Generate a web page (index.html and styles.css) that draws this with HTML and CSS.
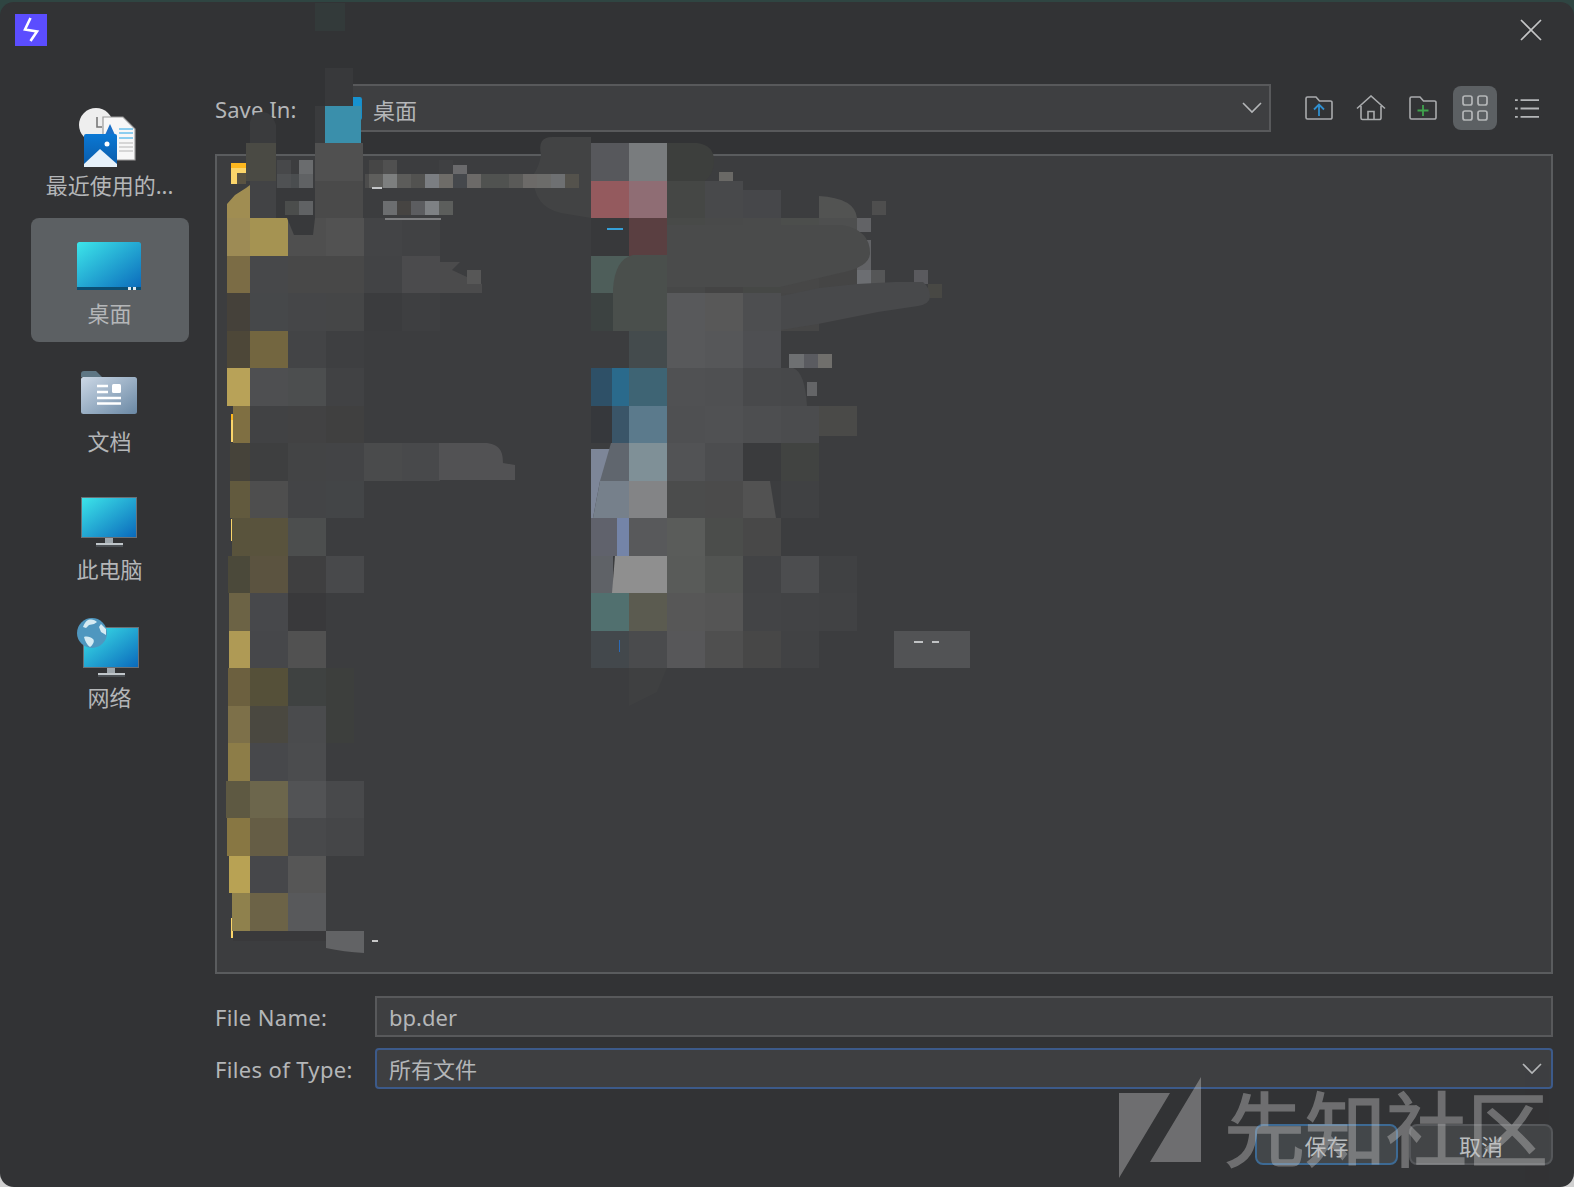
FILE: index.html
```html
<!DOCTYPE html>
<html lang="zh">
<head>
<meta charset="utf-8">
<title>Save</title>
<link rel="stylesheet" href="styles.css">
</head>
<body>
<div class="dialog">
  <header class="titlebar">
    <svg class="app-icon" viewBox="0 0 32 32"><rect width="32" height="32" fill="#5b4dff"/><path d="M15.5 4 10 15.5l12 2L15.5 27" fill="none" stroke="#fff" stroke-width="2.6"/></svg>
    <svg class="close" viewBox="0 0 22 22"><path d="M1 1l20 20M21 1 1 21" stroke="#c4c5c6" stroke-width="1.7" fill="none"/></svg>
  </header>
  <main class="main">
    <nav class="sidebar">
      <div class="place">
        <svg class="place-icon" viewBox="0 0 72 72">
          <defs>
            <linearGradient id="g1" x1="0" y1="0" x2="1" y2="1"><stop offset="0" stop-color="#3de6ea"/><stop offset="1" stop-color="#0a68bb"/></linearGradient>
            <linearGradient id="g2" x1="0" y1="0" x2="0" y2="1"><stop offset="0" stop-color="#0a78d4"/><stop offset="1" stop-color="#0a5aa8"/></linearGradient>
            <linearGradient id="g3" x1="0" y1="0" x2="1" y2="1"><stop offset="0" stop-color="#ccd8e6"/><stop offset="1" stop-color="#6a88a4"/></linearGradient>
          </defs>
          <circle cx="22" cy="25" r="17" fill="#eeeeee"/>
          <path d="M23 17v10h5" stroke="#777" stroke-width="1.6" fill="none"/>
          <path d="M29 17h20l12 12v31H29z" fill="#f7f7f7" stroke="#9a9a9a" stroke-width="1.2"/>
          <path d="M45 29h14M45 33h14M45 38h14" stroke="#20a4e8" stroke-width="1"/>
          <path d="M45 43h14M45 47h14M45 51h14" stroke="#b5b5b5" stroke-width="1"/>
          <path d="M36 24l-5 11h10z" fill="#1a70c8"/>
          <rect x="10" y="34" width="33" height="33" rx="2" fill="url(#g2)"/>
          <circle cx="33" cy="44" r="2.5" fill="#fff"/>
          <path d="M10 67v-3l16-15 17 15v3z" fill="#e6f1fa"/>
        </svg>
        <span class="place-label">最近使用的...</span>
      </div>
      <div class="place selected">
        <svg class="place-icon" viewBox="0 0 72 72">
          <rect x="3" y="14" width="64" height="48" rx="2.5" fill="url(#g1)"/>
          <rect x="3" y="59" width="64" height="3" fill="#0b4f74"/>
          <rect x="54" y="59" width="3" height="3" fill="#dfe8ee"/><rect x="59" y="59" width="3" height="3" fill="#dfe8ee"/>
        </svg>
        <span class="place-label">桌面</span>
      </div>
      <div class="place">
        <svg class="place-icon" viewBox="0 0 72 72">
          <path d="M7 21v-3a3 3 0 0 1 3-3h12l6 6z" fill="#5e7684"/>
          <rect x="7" y="21" width="56" height="37" rx="2.5" fill="url(#g3)"/>
          <path d="M23 30h11M23 36h11M23 42h24M23 47.500h24" stroke="#fff" stroke-width="2.600"/>
          <rect x="38" y="28" width="9" height="9" rx="1.500" fill="#fff"/>
        </svg>
        <span class="place-label">文档</span>
      </div>
      <div class="place">
        <svg class="place-icon" viewBox="0 0 72 72">
          <rect x="7.500" y="13.500" width="55" height="40" fill="url(#g1)" stroke="#6a7076" stroke-width="1"/>
          <rect x="31" y="54" width="8" height="5" fill="#9ea6ac"/>
          <rect x="22" y="59" width="27" height="2" fill="#c0c6ca"/>
          <rect x="22" y="61" width="27" height="2" fill="#4c5054"/>
        </svg>
        <span class="place-label">此电脑</span>
      </div>
      <div class="place">
        <svg class="place-icon" viewBox="0 0 72 72">
          <rect x="9.500" y="15.500" width="55" height="40" fill="url(#g1)" stroke="#6a7076" stroke-width="1"/>
          <rect x="33" y="56" width="8" height="5" fill="#9ea6ac"/>
          <rect x="24" y="61" width="27" height="2" fill="#c0c6ca"/>
          <rect x="24" y="63" width="27" height="2" fill="#4c5054"/>
          <circle cx="18" cy="21" r="15" fill="#4f97bf"/>
          <path d="M10 25c3-1 7 0 9 2 2 2 0 6-3 8-3-2-5-6-6-10zM14 8c4-1 7 0 9 2l-3 2-5 1-3 3-3-1c1-3 3-6 5-7zM27 12l5 5 0 6-5-3-2-5z" fill="#d5ebf3"/>
        </svg>
        <span class="place-label">网络</span>
      </div>
    </nav>
    <section class="content">
      <div class="toolbar">
        <span class="field-label save-label">Save In:</span>
        <div class="combo path-combo">
          <svg class="combo-folder" viewBox="0 0 24 24"><rect x="1" y="1" width="22" height="22" rx="2" fill="#1792cf"/></svg>
          <span class="value">桌面</span>
          <svg class="chevron" viewBox="0 0 20 12"><path d="M1 1l9 9 9-9" fill="none" stroke="#b4b6b8" stroke-width="1.600"/></svg>
        </div>
        <div class="tools">
          <button class="tool"><svg viewBox="0 0 30 26"><path d="M2 22.500V3.500a1.500 1.500 0 0 1 1.500-1.500H12l3.500 4h11A1.500 1.500 0 0 1 28 7.500v15a1.500 1.500 0 0 1-1.500 1.500h-23A1.500 1.500 0 0 1 2 22.500z" fill="none" stroke="#a9abad" stroke-width="1.600"/><path d="M15 21V10M10 14.500l5-5 5 5" fill="none" stroke="#2f8fd0" stroke-width="1.800"/></svg></button>
          <button class="tool"><svg viewBox="0 0 30 26"><path d="M1 13.500 15 1l14 12.500M5 11v12a1.500 1.500 0 0 0 1.500 1.500h17A1.500 1.500 0 0 0 25 23V11M12 24.500V16.500h6v8" fill="none" stroke="#a9abad" stroke-width="1.600"/></svg></button>
          <button class="tool"><svg viewBox="0 0 30 26"><path d="M2 22.500V3.500a1.500 1.500 0 0 1 1.500-1.500H12l3.500 4h11A1.500 1.500 0 0 1 28 7.500v15a1.500 1.500 0 0 1-1.500 1.500h-23A1.500 1.500 0 0 1 2 22.500z" fill="none" stroke="#a9abad" stroke-width="1.600"/><path d="M15 10v11M9.500 15.500h11" fill="none" stroke="#3fa34d" stroke-width="1.800"/></svg></button>
          <button class="tool active"><svg viewBox="0 0 26 26"><g fill="none" stroke="#b4b6b8" stroke-width="1.700"><rect x="1" y="1" width="9" height="9" rx="2"/><rect x="16" y="1" width="9" height="9" rx="2"/><rect x="1" y="16" width="9" height="9" rx="2"/><rect x="16" y="16" width="9" height="9" rx="2"/></g></svg></button>
          <button class="tool"><svg class="list-glyph" viewBox="0 0 26 22"><path d="M6 2h20M6 11h20M6 20h20M0 2h3M0 11h3M0 20h3" fill="none" stroke="#b4b6b8" stroke-width="1.900"/></svg></button>
        </div>
      </div>
      <div class="file-list"></div>
      <div class="form-row">
        <span class="field-label">File Name:</span>
        <div class="input"><span class="value">bp.der</span></div>
      </div>
      <div class="form-row">
        <span class="field-label">Files of Type:</span>
        <div class="input focused"><span class="value">所有文件</span>
          <svg class="chevron" viewBox="0 0 20 12"><path d="M1 1l9 9 9-9" fill="none" stroke="#b4b6b8" stroke-width="1.600"/></svg>
        </div>
      </div>
      <div class="actions">
        <button class="btn primary">保存</button>
        <button class="btn">取消</button>
      </div>
    </section>
  </main>

  <svg class="mosaic" viewBox="0 0 1574 1187" shape-rendering="crispEdges">
    <rect x="315" y="3" width="30" height="28" fill="#333a3a"/>
    <rect x="325" y="68" width="28" height="38" fill="#38393b"/>
    <path d="M250 143v-21q2-10 12-10t14 13v18z" fill="#3a3b3d" shape-rendering="auto"/>
    <rect x="315" y="106" width="10" height="37" fill="#3a3b3d"/>
    <rect x="325" y="106" width="36" height="37" fill="#3a8fab"/>
    <rect x="231" y="163" width="15" height="5" fill="#fdb81f"/>
    <rect x="231" y="168" width="15" height="16" fill="#fbd56a"/>
    <rect x="237" y="173" width="9" height="11" fill="#5a5342"/>
    <rect x="231" y="414" width="6" height="6" fill="#fdb81f"/>
    <rect x="231" y="420" width="3" height="22" fill="#fbd56a"/>
    <rect x="231" y="519" width="3" height="22" fill="#fbd56a"/>
    <rect x="231" y="918" width="5" height="20" fill="#fbd56a"/>

    <!-- left column: strip and columns 0-5 -->
    <rect x="246" y="143" width="30" height="38" fill="#4a4a44"/>
    <rect x="315" y="143" width="48" height="38" fill="#505050"/>
    <rect x="250" y="181" width="26" height="37" fill="#424345"/>
    <rect x="315" y="181" width="48" height="37" fill="#4a4a4a"/>
    <path d="M276 188h39v30h-39z" fill="#38393b"/>
    <path d="M227 204l8-9 11-7 4-3v33h-23z" fill="#a08d52" shape-rendering="auto"/>

    <rect x="227" y="218" width="23" height="38" fill="#9d8b55"/><rect x="250" y="218" width="38" height="38" fill="#a59352"/><rect x="288" y="218" width="38" height="38" fill="#4f4f4f"/><rect x="326" y="218" width="38" height="38" fill="#525252"/><rect x="364" y="218" width="38" height="38" fill="#434446"/><rect x="402" y="218" width="38" height="38" fill="#414244"/>
    <path d="M287 218h28l-2 17h-19z" fill="#38393b" shape-rendering="auto"/>
    <rect x="227" y="256" width="23" height="37" fill="#7b6c45"/><rect x="250" y="256" width="38" height="37" fill="#47484a"/><rect x="288" y="256" width="38" height="37" fill="#484848"/><rect x="326" y="256" width="38" height="37" fill="#484848"/><rect x="364" y="256" width="38" height="37" fill="#424345"/><rect x="402" y="256" width="38" height="37" fill="#4b4b4d"/><path d="M440 262h20l-8 8 30 14v9h-42z" fill="#4b4b4c" shape-rendering="auto"/><rect x="467" y="270" width="14" height="14" fill="#575757"/>
    <rect x="227" y="293" width="23" height="38" fill="#45413a"/><rect x="250" y="293" width="38" height="38" fill="#46484a"/><rect x="288" y="293" width="38" height="38" fill="#454648"/><rect x="326" y="293" width="38" height="38" fill="#454647"/><rect x="364" y="293" width="38" height="38" fill="#3b3c3e"/><rect x="402" y="293" width="38" height="38" fill="#3e3f41"/>
    <rect x="227" y="331" width="23" height="37" fill="#4d4738"/><rect x="250" y="331" width="38" height="37" fill="#736640"/><rect x="288" y="331" width="38" height="37" fill="#434446"/><rect x="326" y="331" width="38" height="37" fill="#3e3f41"/>
    <rect x="227" y="368" width="23" height="38" fill="#b8a258"/><rect x="250" y="368" width="38" height="38" fill="#4e4f51"/><rect x="288" y="368" width="38" height="38" fill="#4c4e4f"/><rect x="326" y="368" width="38" height="38" fill="#414244"/>
    <rect x="233" y="406" width="17" height="37" fill="#7f6f42"/><rect x="250" y="406" width="38" height="37" fill="#414244"/><rect x="288" y="406" width="38" height="37" fill="#424243"/><rect x="326" y="406" width="38" height="37" fill="#404040"/>
    <rect x="230" y="443" width="20" height="38" fill="#46433a"/><rect x="250" y="443" width="38" height="38" fill="#3e3f40"/><rect x="288" y="443" width="38" height="38" fill="#434445"/><rect x="326" y="443" width="38" height="38" fill="#434446"/><rect x="364" y="443" width="38" height="38" fill="#4a4b4c"/><rect x="402" y="443" width="38" height="38" fill="#48494b"/><path d="M439 443h48c14 2 16 10 16 20l12 2v15h-76z" fill="#525254" shape-rendering="auto"/>
    <rect x="230" y="481" width="20" height="37" fill="#625a3e"/><rect x="250" y="481" width="38" height="37" fill="#4e4e4e"/><rect x="288" y="481" width="38" height="37" fill="#434446"/><rect x="326" y="481" width="38" height="37" fill="#434547"/>
    <rect x="232" y="518" width="18" height="38" fill="#59533c"/><rect x="250" y="518" width="38" height="38" fill="#59533d"/><rect x="288" y="518" width="38" height="38" fill="#4c4e4e"/><rect x="326" y="518" width="28" height="38" fill="#3c3d3f"/>
    <rect x="228" y="556" width="22" height="37" fill="#4b493a"/><rect x="250" y="556" width="38" height="37" fill="#5b5340"/><rect x="288" y="556" width="38" height="37" fill="#3f3f40"/><rect x="326" y="556" width="38" height="37" fill="#48494b"/>
    <rect x="229" y="593" width="21" height="38" fill="#6c6345"/><rect x="250" y="593" width="38" height="38" fill="#47484b"/><rect x="288" y="593" width="38" height="38" fill="#39393b"/>
    <rect x="229" y="631" width="21" height="37" fill="#af9a55"/><rect x="250" y="631" width="38" height="37" fill="#46474a"/><rect x="288" y="631" width="38" height="37" fill="#515151"/>
    <rect x="228" y="668" width="22" height="38" fill="#6c603f"/><rect x="250" y="668" width="38" height="38" fill="#555039"/><rect x="288" y="668" width="38" height="38" fill="#3f4241"/><rect x="326" y="668" width="28" height="38" fill="#3d3f3d"/>
    <rect x="228" y="706" width="22" height="37" fill="#7d7049"/><rect x="250" y="706" width="38" height="37" fill="#4a4840"/><rect x="288" y="706" width="38" height="37" fill="#4a4b4d"/><rect x="326" y="706" width="28" height="37" fill="#3d3f3d"/>
    <rect x="228" y="743" width="22" height="38" fill="#8d7d48"/><rect x="250" y="743" width="38" height="38" fill="#47484b"/><rect x="288" y="743" width="38" height="38" fill="#4b4c4e"/>
    <rect x="226" y="781" width="24" height="37" fill="#5e5942"/><rect x="250" y="781" width="38" height="37" fill="#6c664c"/><rect x="288" y="781" width="38" height="37" fill="#525355"/><rect x="326" y="781" width="38" height="37" fill="#48494b"/>
    <rect x="227" y="818" width="23" height="38" fill="#887743"/><rect x="250" y="818" width="38" height="38" fill="#655d45"/><rect x="288" y="818" width="38" height="38" fill="#48494b"/><rect x="326" y="818" width="38" height="38" fill="#454648"/>
    <rect x="229" y="856" width="21" height="37" fill="#b8a254"/><rect x="250" y="856" width="38" height="37" fill="#46474a"/><rect x="288" y="856" width="38" height="37" fill="#565656"/>
    <rect x="232" y="893" width="18" height="38" fill="#8f814d"/><rect x="250" y="893" width="38" height="38" fill="#6c6347"/><rect x="288" y="893" width="38" height="38" fill="#58595b"/>
    <rect x="233" y="931" width="93" height="10" fill="#39393b"/><path d="M326 931h38v22q-20-1-38-5z" fill="#626365" shape-rendering="auto"/><rect x="372" y="940" width="6" height="2" fill="#c8c8c8"/>

    <!-- blob under the small tiles -->
    <path d="M552 137h39v81l-30-5q-28-6-28-38 6-8 8-20-4-18 11-18z" fill="#424344" shape-rendering="auto"/>

    <!-- small tiles of the top rows -->
    <rect x="277" y="160" width="14" height="14" fill="#47484a"/><rect x="299" y="160" width="14" height="14" fill="#6a6c6e"/>
    <rect x="277" y="174" width="14" height="14" fill="#4f5153"/><rect x="291" y="174" width="14" height="14" fill="#4a4d4f"/><rect x="299" y="174" width="14" height="14" fill="#606264"/>
    <rect x="299" y="201" width="14" height="14" fill="#606264"/><rect x="285" y="201" width="14" height="14" fill="#4b4d4c"/>
    <rect x="369" y="160" width="14" height="14" fill="#464646"/><rect x="383" y="160" width="14" height="14" fill="#505050"/>
    <rect x="365" y="174" width="14" height="14" fill="#4c4c4c"/><rect x="369" y="174" width="14" height="14" fill="#5e5e5c"/><rect x="383" y="174" width="14" height="14" fill="#7d7f7f"/><rect x="397" y="174" width="14" height="14" fill="#5c5c5a"/><rect x="411" y="174" width="14" height="14" fill="#525250"/><rect x="425" y="174" width="14" height="14" fill="#7b7e82"/><rect x="439" y="174" width="14" height="14" fill="#6e6c68"/><rect x="453" y="174" width="14" height="14" fill="#45484c"/><rect x="467" y="174" width="14" height="14" fill="#6c6a68"/><rect x="481" y="174" width="14" height="14" fill="#505250"/><rect x="495" y="174" width="14" height="14" fill="#505250"/><rect x="509" y="174" width="14" height="14" fill="#5a5a58"/><rect x="523" y="174" width="14" height="14" fill="#6c6a68"/><rect x="537" y="174" width="14" height="14" fill="#6c6c6a"/><rect x="551" y="174" width="14" height="14" fill="#6e7072"/><rect x="565" y="174" width="14" height="14" fill="#54524c"/>
    <rect x="453" y="165" width="14" height="9" fill="#6a6a6c"/><rect x="439" y="160" width="14" height="14" fill="#3f4042"/>
    <rect x="383" y="201" width="14" height="14" fill="#6c6e70"/><rect x="397" y="201" width="14" height="14" fill="#464442"/><rect x="411" y="201" width="14" height="14" fill="#5c5d60"/><rect x="425" y="201" width="14" height="14" fill="#7e8184"/><rect x="439" y="201" width="14" height="14" fill="#5c5e5c"/>
    <rect x="372" y="187" width="10" height="2" fill="#c4c6c8"/><rect x="385" y="218" width="56" height="2" fill="#7d7e80"/>

    <!-- right block: columns 9-15 -->
    <rect x="591" y="143" width="38" height="38" fill="#57585c"/><rect x="629" y="143" width="38" height="38" fill="#797c7e"/><path d="M667 143h30q17 2 17 18 0 13-9 20h-38z" fill="#3d3f3d" shape-rendering="auto"/><rect x="719" y="172" width="14" height="12" fill="#6a6966"/>
    <rect x="591" y="181" width="38" height="37" fill="#945a5e"/><rect x="629" y="181" width="38" height="37" fill="#8f6d74"/><rect x="667" y="181" width="38" height="37" fill="#454745"/><rect x="705" y="181" width="38" height="37" fill="#48494b"/><rect x="743" y="190" width="38" height="28" fill="#46474a"/><path d="M819 196q36 2 38 22h-38z" fill="#525352" shape-rendering="auto"/><rect x="872" y="201" width="14" height="14" fill="#4e4e4e"/>
    <rect x="591" y="218" width="38" height="38" fill="#38393b"/><rect x="629" y="218" width="38" height="38" fill="#5a3f41"/><rect x="667" y="218" width="38" height="38" fill="#484a48"/><rect x="705" y="218" width="38" height="38" fill="#494a4a"/><rect x="743" y="218" width="38" height="38" fill="#4a4b4b"/><rect x="781" y="218" width="38" height="38" fill="#4c4e4c"/><rect x="819" y="218" width="38" height="38" fill="#4e4f4f"/><rect x="857" y="218" width="14" height="14" fill="#626366"/><rect x="607" y="228" width="16" height="2" fill="#35a0d8"/>
    <rect x="591" y="256" width="38" height="37" fill="#4e5e5a"/><rect x="629" y="256" width="38" height="37" fill="#45504a"/><rect x="667" y="256" width="38" height="37" fill="#474848"/><rect x="705" y="256" width="38" height="37" fill="#444444"/><rect x="743" y="256" width="38" height="37" fill="#464846"/><rect x="781" y="256" width="38" height="37" fill="#474747"/><rect x="819" y="256" width="38" height="37" fill="#454545"/><rect x="857" y="240" width="14" height="30" fill="#626366"/><rect x="857" y="270" width="14" height="23" fill="#6c6e72"/><rect x="871" y="270" width="14" height="14" fill="#555657"/><rect x="914" y="270" width="14" height="14" fill="#5a5a5e"/><rect x="928" y="284" width="14" height="14" fill="#484844"/>
    <path d="M667 225h175q28 5 28 28 0 14-30 20l-60 14h-113z" fill="#4a4b4b" shape-rendering="auto"/>
    <rect x="591" y="293" width="38" height="38" fill="#3c4241"/><rect x="629" y="293" width="38" height="38" fill="#4a4e4b"/><rect x="667" y="293" width="38" height="38" fill="#58595b"/><rect x="705" y="293" width="38" height="38" fill="#585858"/><rect x="743" y="293" width="38" height="38" fill="#4d4e50"/><rect x="781" y="293" width="38" height="38" fill="#464646"/>
    <path d="M613 331v-42q2-30 20-34h34v76z" fill="#4a4f4c" shape-rendering="auto"/>
    <path d="M781 296l38-8 38-4 38-2h28q7 6 7 14t-12 10l-40 6-60 12-37 6z" fill="#48494b" shape-rendering="auto"/>
    <rect x="629" y="331" width="38" height="37" fill="#444b4d"/><rect x="667" y="331" width="38" height="37" fill="#58595b"/><rect x="705" y="331" width="38" height="37" fill="#565759"/><rect x="743" y="331" width="38" height="37" fill="#4e4f52"/><rect x="789" y="354" width="15" height="14" fill="#6e7072"/><rect x="804" y="354" width="14" height="14" fill="#5a5b60"/><rect x="818" y="354" width="14" height="14" fill="#706f6c"/>
    <rect x="591" y="368" width="38" height="38" fill="#2e5067"/><rect x="612" y="368" width="17" height="38" fill="#2a6a8c"/><rect x="629" y="368" width="38" height="38" fill="#3e6474"/><rect x="667" y="368" width="38" height="38" fill="#505153"/><rect x="705" y="368" width="38" height="38" fill="#4f5052"/><rect x="743" y="368" width="38" height="38" fill="#48494b"/><path d="M781 368h12q12 4 14 38h-26z" fill="#47484a" shape-rendering="auto"/><rect x="807" y="382" width="10" height="14" fill="#646567"/>
    <rect x="591" y="406" width="21" height="37" fill="#36383c"/><rect x="612" y="406" width="17" height="37" fill="#3a5568"/><rect x="629" y="406" width="38" height="37" fill="#5b7a8c"/><rect x="667" y="406" width="38" height="37" fill="#4f5052"/><rect x="705" y="406" width="38" height="37" fill="#505153"/><rect x="743" y="406" width="38" height="37" fill="#4d4e50"/><rect x="781" y="406" width="38" height="37" fill="#4b4c4e"/><rect x="819" y="406" width="38" height="30" fill="#4a4a48"/>
    <rect x="591" y="449" width="38" height="32" fill="#7d8698"/><path d="M611 443h18v38h-29z" fill="#60666e" shape-rendering="auto"/><rect x="629" y="443" width="38" height="38" fill="#7f9097"/><rect x="667" y="443" width="38" height="38" fill="#525355"/><rect x="705" y="443" width="38" height="38" fill="#4c4d4f"/><rect x="743" y="443" width="38" height="38" fill="#3a3b3d"/><rect x="781" y="443" width="38" height="38" fill="#414341"/>
    <path d="M600 481h29v37h-36z" fill="#76808b" shape-rendering="auto"/><path d="M591 481h9l-7 37h-2z" fill="#7d8698" shape-rendering="auto"/><rect x="629" y="481" width="38" height="37" fill="#838486"/><rect x="667" y="481" width="38" height="37" fill="#4b4c4c"/><rect x="705" y="481" width="38" height="37" fill="#4b4b4b"/><path d="M743 481h27l6 37h-33z" fill="#525252" shape-rendering="auto"/><rect x="781" y="481" width="38" height="37" fill="#404143"/>
    <rect x="591" y="518" width="26" height="38" fill="#60626c"/><rect x="617" y="518" width="12" height="38" fill="#7484a8"/><rect x="629" y="518" width="38" height="38" fill="#58595b"/><rect x="667" y="518" width="38" height="38" fill="#5a5c5a"/><rect x="705" y="518" width="38" height="38" fill="#4b4d4b"/><rect x="743" y="518" width="38" height="38" fill="#484848"/>
    <rect x="591" y="556" width="22" height="37" fill="#5f6267"/><path d="M615 556h52v37h-55z" fill="#8f8f8f" shape-rendering="auto"/><rect x="667" y="556" width="38" height="37" fill="#595b59"/><rect x="705" y="556" width="38" height="37" fill="#525452"/><rect x="743" y="556" width="38" height="37" fill="#424345"/><rect x="781" y="556" width="38" height="37" fill="#4c4d4f"/><rect x="819" y="556" width="38" height="37" fill="#404143"/>
    <rect x="591" y="593" width="38" height="38" fill="#51706f"/><rect x="629" y="593" width="38" height="38" fill="#5b5b50"/><rect x="667" y="593" width="38" height="38" fill="#575757"/><rect x="705" y="593" width="38" height="38" fill="#555555"/><rect x="743" y="593" width="38" height="38" fill="#434446"/><rect x="781" y="593" width="38" height="38" fill="#424345"/><rect x="819" y="593" width="38" height="38" fill="#414244"/>
    <rect x="591" y="631" width="38" height="37" fill="#43484c"/><rect x="629" y="631" width="38" height="37" fill="#4a4b4d"/><rect x="667" y="631" width="38" height="37" fill="#575759"/><rect x="705" y="631" width="38" height="37" fill="#4f4f4f"/><rect x="743" y="631" width="38" height="37" fill="#474747"/><rect x="781" y="631" width="38" height="37" fill="#414244"/><rect x="894" y="631" width="76" height="37" fill="#525355"/>
    <rect x="914" y="641" width="9" height="2" fill="#c0c2c4"/><rect x="932" y="641" width="7" height="2" fill="#c0c2c4"/><rect x="619" y="640" width="1" height="12" fill="#2a6ab8"/><path d="M629 668h38l-10 24-28 14z" fill="#3f4041" shape-rendering="auto"/>
  </svg>

  <div class="watermark">
    <svg class="wm-logo" viewBox="0 0 82 101"><path d="M0 16h51L0 101zM82 0v85H31z" fill="#c8c8c8"/></svg>
    <span class="wm-text">先知社区</span>
  </div>
</div>
</body>
</html>
```

FILE: styles.css
```css
* { box-sizing: border-box; }
html, body { margin: 0; height: 100%; }
body {
  background: linear-gradient(#2f4542 50%, #cfcfcf 50%);
  overflow: hidden;
  font-family: "Noto Sans", "Noto Sans CJK SC", sans-serif;
  font-size: 22px;
  color: #b4b6b8;
}
.dialog {
  position: relative;
  width: 1574px;
  height: 1185px;
  margin-top: 2px;
  background: #323335;
  border-radius: 14px;
  overflow: hidden;
  display: flex;
  flex-direction: column;
}
.titlebar {
  height: 60px;
  padding: 12px 32px 0 15px;
  display: flex;
  justify-content: space-between;
  align-items: flex-start;
  flex: none;
}
.app-icon { width: 32px; height: 32px; display: block; }
.close { width: 22px; height: 22px; margin-top: 5px; display: block; }

.main {
  flex: 1;
  display: flex;
  gap: 26px;
  padding: 22px 21px 22px 31px;
  min-height: 0;
}
.sidebar {
  width: 158px;
  flex: none;
  display: flex;
  flex-direction: column;
  gap: 4px;
  padding-top: 6px;
}
.place {
  height: 124px;
  padding-top: 10px;
  border-radius: 8px;
  display: flex;
  flex-direction: column;
  align-items: center;
}
.place.selected { background: #5c6063; }
.place-icon { width: 72px; height: 72px; display: block; flex: none; margin-left: -1px; }
.place-label { line-height: 30px; white-space: nowrap; margin: -2px 0 0 -1px; }

.content {
  flex: 1;
  min-width: 0;
  display: flex;
  flex-direction: column;
}
.toolbar {
  display: flex;
  align-items: center;
  height: 48px;
  margin-bottom: 22px;
  flex: none;
}
.field-label { white-space: nowrap; line-height: 30px; letter-spacing: .35px; }
.save-label { width: 110px; flex: none; margin-top: 2px; letter-spacing: .1px; }
.combo {
  height: 48px;
  display: flex;
  align-items: center;
  background: #3e3f41;
  border: 2px solid #58595b;
}
.path-combo {
  width: 946px;
  padding: 0 7px 0 11px;
  flex: none;
}
.combo-folder { width: 25px; height: 25px; margin-right: 10px; flex: none; }
.value { flex: 1; line-height: 30px; }
.path-combo .value { margin-top: 3px; }
.chevron { width: 20px; height: 12px; flex: none; }
.tools {
  display: flex;
  gap: 8px;
  margin-left: 26px;
}
.tool {
  width: 44px;
  height: 44px;
  padding: 0;
  border: 0;
  border-radius: 8px;
  background: transparent;
  display: flex;
  align-items: center;
  justify-content: center;
}
.tool svg { width: 30px; height: 26px; display: block; }
.tool .list-glyph { width: 24px; height: 21px; }
.tool.active { background: #5c6063; }

.file-list {
  flex: 1;
  min-height: 0;
  background: #3c3d3f;
  border: 2px solid #5a5c5e;
}
.form-row {
  display: flex;
  align-items: center;
  height: 41px;
  margin-top: 11px;
  flex: none;
}
.file-list + .form-row { margin-top: 22px; }
.form-row .field-label { width: 160px; flex: none; }
.input {
  flex: 1;
  height: 41px;
  display: flex;
  align-items: center;
  padding: 0 9px 0 12px;
  background: #3e3f41;
  border: 2px solid #58595b;
}
.input.focused {
  border-color: #3c5a8a;
  border-radius: 4px;
}
.actions {
  display: flex;
  justify-content: flex-end;
  gap: 11px;
  margin-top: 35px;
  flex: none;
}
.btn {
  width: 144px;
  height: 41px;
  padding: 0;
  font: inherit;
  color: #b9bcbe;
  background: #434547;
  border: 2px solid #55575a;
  border-radius: 8px;
}
.btn.primary {
  width: 143px;
  background: #43474a;
  border-color: #3d6a94;
}

.mosaic {
  position: absolute;
  left: 0;
  top: -2px;
  width: 1574px;
  height: 1187px;
  pointer-events: none;
}
.watermark {
  position: absolute;
  left: 1119px;
  top: 1075px;
  display: flex;
  align-items: flex-start;
  gap: 23px;
  pointer-events: none;
  opacity: .4;
}
.wm-logo { width: 82px; height: 101px; flex: none; display: block; }
.wm-text {
  font-family: "Noto Sans CJK SC", sans-serif;
  font-size: 81px;
  font-weight: 400;
  line-height: 90px;
  margin-top: 3px;
  color: #c8c8c8;
  -webkit-text-stroke: 1.5px #c8c8c8;
  white-space: nowrap;
}
```
